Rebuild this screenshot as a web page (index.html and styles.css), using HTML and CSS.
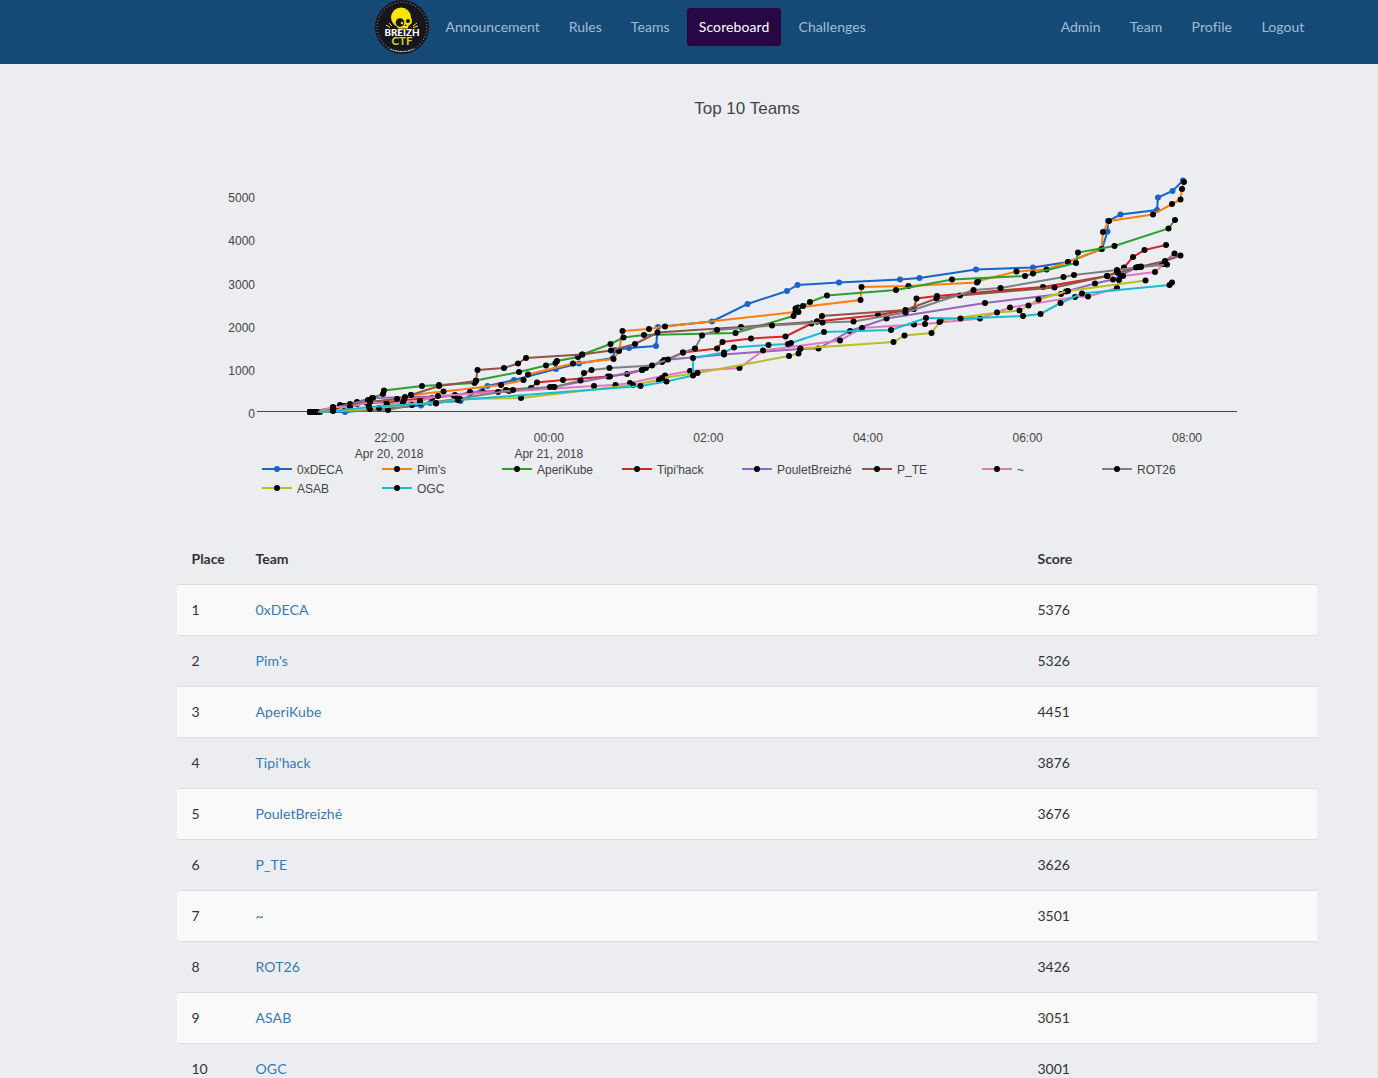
FILE: index.html
```html
<!DOCTYPE html>
<html lang="en">
<head>
<meta charset="utf-8">
<title>Breizh CTF - Scoreboard</title>
<link rel="stylesheet" href="styles.css">
</head>
<body>
<nav class="navbar">
  <a class="brand" href="#" aria-label="Breizh CTF">
    <svg width="54" height="54" viewBox="0 0 54 54">
      <circle cx="27" cy="27" r="27" fill="#17151d"/>
      <circle cx="27" cy="27" r="24.8" fill="none" stroke="#77767b" stroke-width="1.3" stroke-dasharray="1 2.1"/>
      <path d="M15 49q12 5 24 0" fill="none" stroke="#bbb" stroke-width="1.200" stroke-dasharray="2 .6"/>
      <circle cx="26" cy="17.500" r="10" fill="#f8e408"/>
      <circle cx="33" cy="21" r="4" fill="#f8e408"/>
      <path d="M20 24h15l-2 3v1.500h-10l-1-2z" fill="#f8e408"/>
      <circle cx="25" cy="22.500" r="4.300" fill="#17151d"/><circle cx="33" cy="21" r="2.100" fill="#17151d"/><circle cx="27" cy="23" r="1.200" fill="#f8e408"/>
      <path d="M29.500 26l1.200-2 1 2z" fill="#17151d"/>
      <path d="M11 25l4 2.500M14 23l3 3M42 23l-4 3M43 26l-5 1.500" stroke="#f8e408" stroke-width="1"/>
      <text class="logo-name" x="27" y="35.800" textLength="35" lengthAdjust="spacingAndGlyphs">BREIZH</text>
      <text class="logo-ctf" x="27" y="45" textLength="21" lengthAdjust="spacingAndGlyphs">CTF</text>
    </svg>
  </a>
  <div class="links">
    <a href="#">Announcement</a><a href="#">Rules</a><a href="#">Teams</a><a class="active" href="#">Scoreboard</a><a href="#">Challenges</a>
  </div>
  <div class="links account">
    <a href="#">Admin</a><a href="#">Team</a><a href="#">Profile</a><a href="#">Logout</a>
  </div>
</nav>
<main class="container">
  <svg class="chart" width="1140" height="469" viewBox="177 64 1140 469">
    <defs>
      <marker id="dot" markerUnits="userSpaceOnUse" markerWidth="8" markerHeight="8" refX="4" refY="4"><circle cx="4" cy="4" r="3"/></marker>
      <marker id="dot-blue" markerUnits="userSpaceOnUse" markerWidth="8" markerHeight="8" refX="4" refY="4"><circle cx="4" cy="4" r="3" fill="#1864c8"/></marker>
    </defs>
    <text class="title" x="747" y="114">Top 10 Teams</text>
    <g class="y-axis">
      <text x="255" y="202">5000</text><text x="255" y="245">4000</text><text x="255" y="289">3000</text><text x="255" y="332">2000</text><text x="255" y="375">1000</text><text x="255" y="418">0</text>
    </g>
    <path class="zero" d="M257 411.500H1237"/>
    <g class="x-axis">
      <text x="389.200" y="442">22:00</text><text x="389.200" y="458">Apr 20, 2018</text>
      <text x="548.800" y="442">00:00</text><text x="548.800" y="458">Apr 21, 2018</text>
      <text x="708.300" y="442">02:00</text><text x="867.900" y="442">04:00</text><text x="1027.500" y="442">06:00</text><text x="1187" y="442">08:00</text>
    </g>
    <g class="series">
      <polyline class="s1" points="310,412 345,412 421,405.5 430,403 460.5,401 487.5,386 514,380 556,369 579,363.5 613,358 615,350 629,348 656,346 658,327 712,321.500 747.500,304 787,291 797.500,285 839,282.500 900,279.500 919.500,278 976,269.500 1033,267.500 1068,262 1102,249 1107.500,231.500 1108,221 1120.500,214.500 1157,210 1158,197.500 1172.500,191 1183,180.500"/>
      <polyline class="s2" points="310,412 333,408 357,404 397,399 411,395 443.500,391.500 501,385 523.500,380 528,374.500 573,363.500 613.500,359 619,351 622.500,331 649,329 665,326.500 795.500,312 798,307.500 860.500,300 861.500,287 908.500,286 977,282.500 978,281 1016.500,271.500 1046.500,269.500 1068,262 1101.500,249 1103,232 1109,221 1153,214.500 1172,204 1180.500,199.500 1182,189 1184,182"/>
      <polyline class="s3" points="310,412 333,408 340,405 357,402 372,398 383,394 384,390.500 422,386 439,385 474.500,383 476,380.500 519,372 546,365.500 555.500,363 557,361 578,357 582.500,354.500 610.500,344 623.500,337.500 644,335 735.500,333 793.500,316 798.500,312 795.500,308.500 803,306 810,302 827,295.500 896,290 952,279.500 1025,276 1033,273.500 1076,263 1078,252.500 1114.500,246 1168.500,228.500 1175,220"/>
      <polyline class="s4" points="310,412 320,412 333,410 344,406 367,403 386,403 404,400 432,398 455,395 483,392 506,390 531,388 537,382.500 563,380 608,376.500 627,374 642,370 662,362 683,352.500 717,348.500 722.500,342 751,338.500 785.500,336.500 811.500,323.500 817,321.500 878,315 914,309 916.500,298.500 937,296 1043,287 1107.500,276 1117,272 1124,267.500 1133,257 1144.500,250 1166,245"/>
      <polyline class="s5" points="310,412 334,408 350,404 368,400 373,398 454,396 470,392 509,391 553,387 610,376.500 642,370 646,368 664,360 724,354.500 800,349 818.500,348.500 850,331 886.500,318.500 985,303 1061,294 1066,291.500 1095,283.500 1113,279.500 1121,275 1138,267 1162,264 1174.500,253.500"/>
      <polyline class="s6" points="310,412 333,408 368,402 397,399 405,397 411,395 439,386 476,381 477.500,370 504,368 518,363.500 526,358 582,354.500 611,350.500 635,344 657.500,332.500 741,327 817,321.500 822,316 905.500,310 936.500,298.500 960,295.500 1054.500,287.500 1107,276 1118,273 1141,266.500 1165,261 1180.500,255.500"/>
      <polyline class="s7" points="310,412 315,412 333,407 350,407 370,402 387,404 403,403 420,401 438,396 498,392 594,386 615.500,385 630,383 665,375.500 690,371 739.500,368 763,350.500 840,340.500 862,328 914,324.500 925,324 980,318.500 1010,307.500 1075,297 1088,296.500 1117,288 1119,280 1123,276 1155,272 1164,264"/>
      <polyline class="s8" points="310,412 313,412 388,410 412,405 457,399 513,390 550,387 554.500,387 580.500,380.500 584,373 591.500,370 609.500,368 652,365.500 668,359.500 683,352.500 695,348.500 702,335.500 717,330 772,325.500 822.500,322.500 853.500,321.500 905.500,312.500 973.500,290 1000.500,288 1063.500,277 1074,275 1117,270 1136,267.500 1141,267 1167,264.500"/>
      <polyline class="s9" points="310,412 317,412 370,409 379,408 420,403 436,403.500 460,399 521,398 633,385 659,380 662,378 697.500,373 789,356 798.500,353.500 800.500,348.500 893.500,342 904.500,335.500 931.500,333 939.500,322 940.500,320.500 997,312.500 1019.500,310.500 1028.500,305.500 1038.500,299.500 1068,291 1145.500,280.500"/>
      <polyline class="s10" points="310,412 315,412 333,411 369,407 436,403 458,400 640.500,386 666.500,381.500 693,375.500 693,358 724,352.500 734,347.500 768.500,345 788,344 791,343 824,332 891,330 926,318 960.500,318.500 1023,316 1040.500,314 1060.500,303 1082,293.500 1169.500,285 1172,282.500"/>
    </g>
    <g class="series legend">
      <polyline class="s1" points="262,469 277,469 292,469"/><text x="297" y="474">0xDECA</text>
      <polyline class="s2" points="382,469 397,469 412,469"/><text x="417" y="474">Pim's</text>
      <polyline class="s3" points="502,469 517,469 532,469"/><text x="537" y="474">AperiKube</text>
      <polyline class="s4" points="622,469 637,469 652,469"/><text x="657" y="474">Tipi'hack</text>
      <polyline class="s5" points="742,469 757,469 772,469"/><text x="777" y="474">PouletBreizhé</text>
      <polyline class="s6" points="862,469 877,469 892,469"/><text x="897" y="474">P_TE</text>
      <polyline class="s7" points="982,469 997,469 1012,469"/><text x="1017" y="474">~</text>
      <polyline class="s8" points="1102,469 1117,469 1132,469"/><text x="1137" y="474">ROT26</text>
      <polyline class="s9" points="262,488 277,488 292,488"/><text x="297" y="493">ASAB</text>
      <polyline class="s10" points="382,488 397,488 412,488"/><text x="417" y="493">OGC</text>
    </g>
  </svg>
  <table class="scores">
    <colgroup><col class="place"><col class="team"><col></colgroup>
    <thead><tr><th>Place</th><th>Team</th><th>Score</th></tr></thead>
    <tbody>
      <tr><td>1</td><td><a href="#">0xDECA</a></td><td>5376</td></tr>
      <tr><td>2</td><td><a href="#">Pim's</a></td><td>5326</td></tr>
      <tr><td>3</td><td><a href="#">AperiKube</a></td><td>4451</td></tr>
      <tr><td>4</td><td><a href="#">Tipi'hack</a></td><td>3876</td></tr>
      <tr><td>5</td><td><a href="#">PouletBreizhé</a></td><td>3676</td></tr>
      <tr><td>6</td><td><a href="#">P_TE</a></td><td>3626</td></tr>
      <tr><td>7</td><td><a href="#">~</a></td><td>3501</td></tr>
      <tr><td>8</td><td><a href="#">ROT26</a></td><td>3426</td></tr>
      <tr><td>9</td><td><a href="#">ASAB</a></td><td>3051</td></tr>
      <tr><td>10</td><td><a href="#">OGC</a></td><td>3001</td></tr>
    </tbody>
  </table>
</main>
</body>
</html>
```
FILE: styles.css
```css
* { box-sizing: border-box; }
body {
  margin: 0;
  height: 1078px;
  overflow: hidden;
  background: #ecedf1;
  color: #333;
  font: 14px/20px Lato, sans-serif;
}
a { color: #337ab7; text-decoration: none; }
.navbar {
  display: flex;
  align-items: flex-start;
  height: 64px;
  padding: 0 61.500px 0 375px;
  background: #164a76;
}
.brand { width: 54px; height: 54px; margin-right: 4.500px; }
.brand svg { display: block; }
.logo-name, .logo-ctf { font-family: Lato, sans-serif; text-anchor: middle; }
.logo-name { font-size: 9.500px; font-weight: 900; fill: #fff; }
.logo-ctf { font-size: 10.500px; font-weight: 700; fill: #d9d326; }
.links { display: flex; gap: 5px; padding-top: 8px; }
.links a { height: 38px; padding: 9px 12px; border-radius: 3px; color: #a0bdd6; }
.links a:nth-child(n+3) { letter-spacing: .1px; }
.links .active { background: #270844; color: #fff; }
.account { margin-left: auto; gap: 5.300px; }
.container { width: 1140px; margin-left: 177px; }
.chart { display: block; }
.chart text { font: 12px "Liberation Sans", Arial, sans-serif; fill: #444; }
.chart .title { font-size: 17px; text-anchor: middle; }
.y-axis { text-anchor: end; }
.x-axis { text-anchor: middle; }
.zero { stroke: #444; stroke-width: 1; }
.series polyline {
  fill: none;
  stroke-width: 2;
  marker-start: url(#dot);
  marker-mid: url(#dot);
  marker-end: url(#dot);
}
.series .s1 { stroke: #1864c8; marker-start: url(#dot-blue); marker-mid: url(#dot-blue); marker-end: url(#dot-blue); }
.s2 { stroke: #ff7f0e; }
.s3 { stroke: #2ca02c; }
.s4 { stroke: #d62728; }
.s5 { stroke: #9467bd; }
.s6 { stroke: #8c564b; }
.s7 { stroke: #e377c2; }
.s8 { stroke: #7f7f7f; }
.s9 { stroke: #bcbd22; }
.s10 { stroke: #17becf; }
.series.legend polyline { marker-start: none; marker-end: none; }
.scores { width: 100%; table-layout: fixed; border-collapse: collapse; }
.place { width: 64px; }
.team { width: 782px; }
.scores th, .scores td { height: 51px; padding: 0 14.500px; text-align: left; }
.scores th { padding-top: 1px; }
.scores td { border-top: 1px solid #dcdcdf; }
.scores td a { letter-spacing: .1px; }
.scores tbody tr:nth-child(odd) { background: #f9f9f9; }
```
